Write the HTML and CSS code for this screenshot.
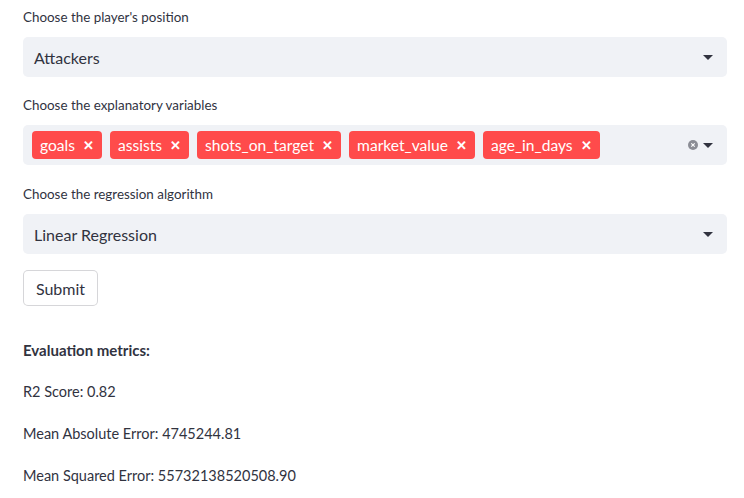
FILE: index.html
```html
<!DOCTYPE html>
<html>
<head>
<meta charset="utf-8">
<link rel="stylesheet" href="styles.css">
</head>
<body>
<main class="page">
  <section class="field">
    <label class="label">Choose the player's position</label>
    <div class="select">
      <span class="value">Attackers</span>
      <span class="icons"><svg class="caret" width="10" height="5" viewBox="0 0 10 5"><path d="M0 0h10L5 5z" fill="#31333f"/></svg></span>
    </div>
  </section>
  <section class="field">
    <label class="label">Choose the explanatory variables</label>
    <div class="select multi">
      <div class="tags">
        <span class="tag">goals<span class="x">✕</span></span>
        <span class="tag">assists<span class="x">✕</span></span>
        <span class="tag">shots_on_target<span class="x">✕</span></span>
        <span class="tag">market_value<span class="x">✕</span></span>
        <span class="tag">age_in_days<span class="x">✕</span></span>
      </div>
      <span class="icons">
        <svg class="clear" width="10" height="10" viewBox="0 0 10 10"><circle cx="5" cy="5" r="5" fill="#8b8d95"/><path d="M3.3 3.3l3.4 3.4M6.7 3.3l-3.4 3.4" stroke="#fff" stroke-width="1.1"/></svg>
        <svg class="caret" width="10" height="5" viewBox="0 0 10 5"><path d="M0 0h10L5 5z" fill="#31333f"/></svg>
      </span>
    </div>
  </section>
  <section class="field">
    <label class="label">Choose the regression algorithm</label>
    <div class="select">
      <span class="value">Linear Regression</span>
      <span class="icons"><svg class="caret" width="10" height="5" viewBox="0 0 10 5"><path d="M0 0h10L5 5z" fill="#31333f"/></svg></span>
    </div>
  </section>
  <button class="btn">Submit</button>
  <div class="results">
    <p class="heading">Evaluation metrics:</p>
    <p>R2 Score: 0.82</p>
    <p>Mean Absolute Error: 4745244.81</p>
    <p>Mean Squared Error: 55732138520508.90</p>
  </div>
</main>
</body>
</html>
```
FILE: styles.css
```css
* { box-sizing: border-box; }
body {
  margin: 0;
  background: #fff;
  color: #31333f;
  font-family: "Lato", "Noto Sans", sans-serif;
}
.page {
  padding: 8px 17px 0 23px;
  display: flex;
  flex-direction: column;
}
.field {
  display: flex;
  flex-direction: column;
}
.field + .field {
  margin-top: 19px;
}
.field:nth-of-type(3) {
  margin-top: 20px;
}
.label {
  font-size: 13.4px;
  line-height: 18px;
  height: 18px;
  margin-bottom: 11px;
}
.select {
  height: 40px;
  background: #f0f2f6;
  border-radius: 5px;
  display: flex;
  align-items: center;
  justify-content: space-between;
  padding: 0 14px 0 11px;
}
.value {
  font-size: 16px;
}
.multi {
  padding-left: 9px;
}
.tags {
  display: flex;
  gap: 8px;
}
.tag {
  background: #ff4b4b;
  color: #fff;
  border-radius: 4px;
  height: 28px;
  display: flex;
  align-items: center;
  padding: 0 8px;
  font-size: 15.6px;
}
.x {
  font-size: 13px;
  font-weight: 700;
  margin-left: 8px;
}
.icons {
  display: flex;
  align-items: center;
  gap: 5px;
}
.btn {
  align-self: flex-start;
  margin-top: 16px;
  height: 36px;
  width: 75px;
  background: #fff;
  border: 1px solid rgba(49, 51, 63, 0.2);
  border-radius: 5px;
  font-family: inherit;
  font-size: 16px;
  color: #31333f;
  padding: 0;
}
.results {
  margin-top: 32px;
}
.results p {
  margin: 0 0 18px;
  font-size: 14.5px;
  line-height: 24px;
}
.results .heading {
  font-weight: 700;
  font-size: 15px;
}
```
